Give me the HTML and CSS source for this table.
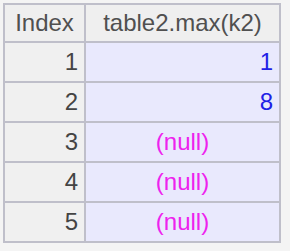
FILE: index.html
```html
<!DOCTYPE html>
<html>
<head>
<meta charset="utf-8">
<link rel="stylesheet" href="styles.css">
</head>
<body>
<table class="grid">
  <thead>
    <tr><th class="idx-h">Index</th><th class="col-h">table2.max(k2)</th></tr>
  </thead>
  <tbody>
    <tr><td class="idx">1</td><td class="val num">1</td></tr>
    <tr><td class="idx">2</td><td class="val num">8</td></tr>
    <tr><td class="idx">3</td><td class="val null">(null)</td></tr>
    <tr><td class="idx">4</td><td class="val null">(null)</td></tr>
    <tr><td class="idx">5</td><td class="val null">(null)</td></tr>
  </tbody>
</table>
</body>
</html>
```
FILE: styles.css
```css
html, body {
  margin: 0;
  padding: 0;
  background: #f4f4f4;
}
body {
  padding: 3px 0 0 3px;
  font-family: "Liberation Sans", Arial, sans-serif;
  font-size: 24px;
}
.grid {
  border-collapse: collapse;
  table-layout: fixed;
  width: 278px;
}
.grid th, .grid td {
  border: 2px solid #bfbfca;
  padding: 0 6px;
  line-height: 28px;
  white-space: nowrap;
}
.grid th {
  height: 36px;
  background: #efefef;
  color: #505050;
  font-weight: normal;
  text-align: center;
}
.grid td {
  height: 38px;
}
.idx-h { width: 67px; }
.idx {
  background: #f0f0f0;
  color: #444444;
  text-align: right;
}
.val {
  background: #e9e9fd;
}
.num {
  color: #2020e6;
  text-align: right;
}
.null {
  color: #ee22ee;
  text-align: center;
}
```
